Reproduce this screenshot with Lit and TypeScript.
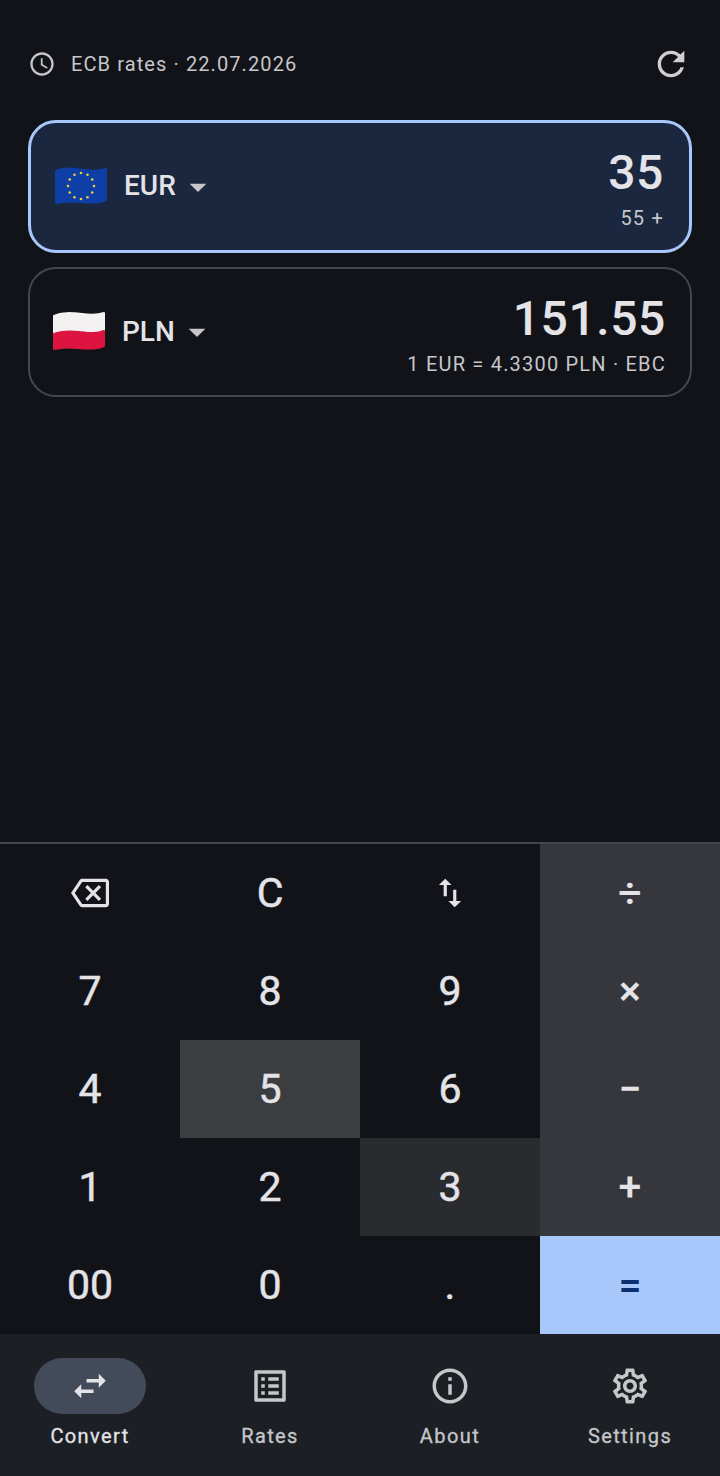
import { LitElement, html, css, svg } from 'lit';
import { customElement } from 'lit/decorators.js';
import { classMap } from 'lit/directives/class-map.js';

const ICONS = {
  clock:
    'M11.99 2C6.47 2 2 6.48 2 12s4.47 10 9.99 10C17.52 22 22 17.52 22 12S17.52 2 11.99 2zM12 20c-4.42 0-8-3.58-8-8s3.58-8 8-8 8 3.58 8 8-3.58 8-8 8zm.5-13H11v6l5.25 3.15.75-1.23-4.5-2.67z',
  refresh:
    'M17.65 6.35C16.2 4.9 14.21 4 12 4c-4.42 0-7.99 3.58-7.99 8s3.57 8 7.99 8c3.73 0 6.84-2.55 7.73-6h-2.08c-.82 2.33-3.04 4-5.65 4-3.31 0-6-2.69-6-6s2.69-6 6-6c1.66 0 3.14.69 4.22 1.78L13 11h7V4l-2.35 2.35z',
  drop: 'M7 10l5 5 5-5z',
  backspace:
    'M22 3H7c-.69 0-1.23.35-1.59.88L0 12l5.41 8.11c.36.53.9.89 1.59.89h15c1.1 0 2-.9 2-2V5c0-1.1-.9-2-2-2zm0 16H7.07L2.4 12l4.66-7H22v14zm-11.59-2L14 13.41 17.59 17 19 15.59 15.41 12 19 8.41 17.59 7 14 10.59 10.41 7 9 8.41 12.59 12 9 15.59z',
  swapVert: 'M16 17.01V10h-2v7.01h-3L15 21l4-3.99h-3zM9 3L5 6.99h3V14h2V6.99h3L9 3z',
  swapHoriz: 'M6.99 11L3 15l3.99 4v-3H14v-2H6.99v-3zM21 9l-3.99-4v3H10v2h7.01v3L21 9z',
  list:
    'M19 5v14H5V5h14m1.1-2H3.9c-.5 0-.9.4-.9.9v16.2c0 .4.4.9.9.9h16.2c.4 0 .9-.5.9-.9V3.9c0-.5-.5-.9-.9-.9zM11 7h6v2h-6V7zm0 4h6v2h-6v-2zm0 4h6v2h-6zM7 7h2v2H7zm0 4h2v2H7zm0 4h2v2H7z',
  info:
    'M11 7h2v2h-2zm0 4h2v6h-2zm1-9C6.48 2 2 6.48 2 12s4.48 10 10 10 10-4.48 10-10S17.52 2 12 2zm0 18c-4.41 0-8-3.59-8-8s3.59-8 8-8 8 3.59 8 8-3.59 8-8 8z',
  settings:
    'M19.43 12.98c.04-.32.07-.64.07-.98 0-.34-.03-.66-.07-.98l2.11-1.65c.19-.15.24-.42.12-.64l-2-3.46c-.09-.16-.26-.25-.44-.25-.06 0-.12.01-.17.03l-2.49 1c-.52-.4-1.08-.73-1.69-.98l-.38-2.65C14.46 2.18 14.25 2 14 2h-4c-.25 0-.46.18-.49.42l-.38 2.65c-.61.25-1.17.59-1.69.98l-2.49-1c-.06-.02-.12-.03-.18-.03-.17 0-.34.09-.43.25l-2 3.46c-.13.22-.07.49.12.64l2.11 1.65c-.04.32-.07.65-.07.98 0 .33.03.66.07.98l-2.11 1.65c-.19.15-.24.42-.12.64l2 3.46c.09.16.26.25.44.25.06 0 .12-.01.17-.03l2.49-1c.52.4 1.08.73 1.69.98l.38 2.65c.03.24.24.42.49.42h4c.25 0 .46-.18.49-.42l.38-2.65c.61-.25 1.17-.59 1.69-.98l2.49 1c.06.02.12.03.18.03.17 0 .34-.09.43-.25l2-3.46c.12-.22.07-.49-.12-.64l-2.11-1.65zm-1.98-1.71c.04.31.05.52.05.73 0 .21-.02.43-.05.73l-.14 1.13.89.7 1.08.84-.7 1.21-1.27-.51-1.04-.42-.9.68c-.43.32-.84.56-1.25.73l-1.06.43-.16 1.13-.2 1.35h-1.4l-.19-1.35-.16-1.13-1.06-.43c-.43-.18-.83-.41-1.23-.71l-.91-.7-1.06.43-1.27.51-.7-1.21 1.08-.84.89-.7-.14-1.13c-.03-.31-.05-.54-.05-.74s.02-.43.05-.73l.14-1.13-.89-.7-1.08-.84.7-1.21 1.27.51 1.04.42.9-.68c.43-.32.84-.56 1.25-.73l1.06-.43.16-1.13.2-1.35h1.39l.19 1.35.16 1.13 1.06.43c.43.18.83.41 1.23.71l.91.7 1.06-.43 1.27-.51.7 1.21-1.07.85-.89.7.14 1.13zM12 8c-2.21 0-4 1.79-4 4s1.79 4 4 4 4-1.79 4-4-1.79-4-4-4zm0 6c-1.1 0-2-.9-2-2s.9-2 2-2 2 .9 2 2-.9 2-2 2z',
};

const icon = (d: string, size: number) => html`
  <svg class="icon" width=${size} height=${size} viewBox="0 0 24 24" fill="currentColor"><path d=${d}></path></svg>
`;

// wavy flag outline, same shape for both currencies
const euFlag = () => {
  const stars = Array.from({ length: 12 }, (_, i) => {
    const a = (i * Math.PI) / 6;
    return svg`<circle cx=${27 + 13 * Math.sin(a)} cy=${19 + 13 * Math.cos(a)} r="1.3" fill="#f0cf3a"></circle>`;
  });
  return html`
    <svg class="flag" width="54" height="38" viewBox="0 0 54 38">
      <path
        d="M2 4C12 0 20 2 30 3C38 4 46 4 52 2V33C45 36 37 36 27 35C17 34 9 34 2 36Z"
        fill="#0d3fa6"
        stroke="#0d3fa6"
        stroke-width="2"
        stroke-linejoin="round"
      ></path>
      ${stars}
    </svg>
  `;
};

const plFlag = () => html`
  <svg class="flag" width="54" height="40" viewBox="0 0 54 40">
    <path
      d="M2 5C10 1 20 2 30 3C38 4 46 4 52 2V20C45 23 37 22 27 21C17 20 9 20 2 23Z"
      fill="#f3f1f2"
      stroke="#f3f1f2"
      stroke-width="2"
      stroke-linejoin="round"
    ></path>
    <path
      d="M2 23C9 20 17 20 27 21C37 22 45 23 52 20V35C45 38 37 38 27 37C17 36 9 36 2 38Z"
      fill="#dc143f"
      stroke="#dc143f"
      stroke-width="2"
      stroke-linejoin="round"
    ></path>
  </svg>
`;

const KEYS = [
  { icon: ICONS.backspace, size: 38 },
  { label: 'C' },
  { icon: ICONS.swapVert, size: 38 },
  { label: '÷', kind: 'op' },
  { label: '7' },
  { label: '8' },
  { label: '9' },
  { label: '×', kind: 'op' },
  { label: '4' },
  { label: '5', kind: 'press-strong' },
  { label: '6' },
  { label: '−', kind: 'op' },
  { label: '1' },
  { label: '2' },
  { label: '3', kind: 'press-soft' },
  { label: '+', kind: 'op' },
  { label: '00' },
  { label: '0' },
  { label: '.' },
  { label: '=', kind: 'op equals' },
];

const TABS = [
  { label: 'Convert', icon: ICONS.swapHoriz, active: true },
  { label: 'Rates', icon: ICONS.list },
  { label: 'About', icon: ICONS.info },
  { label: 'Settings', icon: ICONS.settings },
];

@customElement('app-root')
export class AppRoot extends LitElement {
  static override styles = css`
    :host {
      display: flex;
      flex-direction: column;
      height: 100vh;
      background: #111318;
      color: #e3e3e8;
      font-family: Roboto, 'Liberation Sans', sans-serif;
    }

    .icon {
      display: block;
      flex: none;
    }

    .main {
      flex: 1;
      padding: 0 28px;
    }

    .status {
      display: flex;
      align-items: center;
      height: 120px;
      padding: 8px 1px 0 0;
      box-sizing: border-box;
      color: #c6c6cb;
      font-size: 20px;
      letter-spacing: 1.1px;
    }

    .status .clock {
      margin-right: 15px;
    }

    .status .label {
      flex: 1;
    }

    .status .refresh {
      color: #d0d0d3;
    }

    .card {
      display: flex;
      align-items: center;
      justify-content: space-between;
      box-sizing: border-box;
      border-radius: 28px;
      border: 2px solid #45474c;
      height: 130px;
      padding: 0 24px 0 22px;
      margin-bottom: 14px;
    }

    .card.active {
      height: 133px;
      border: 3px solid #a8c7fa;
      background: #1a273e;
      padding-right: 25px;
      padding-left: 23px;
    }

    .currency {
      display: flex;
      align-items: center;
      gap: 16px;
      padding-bottom: 2px;
      font-size: 28px;
      font-weight: 500;
    }

    .currency .drop {
      margin-left: -14px;
      margin-top: 2px;
      color: #c6c6cb;
    }

    .amounts {
      padding-top: 4px;
      text-align: right;
    }

    .value {
      font-size: 48px;
      line-height: 56px;
      font-weight: 500;
      letter-spacing: 0.6px;
    }

    .sub {
      margin-top: 3px;
      font-size: 20px;
      line-height: 28px;
      letter-spacing: 1.2px;
      color: #c6c6cb;
    }

    .pad {
      display: grid;
      grid-template-columns: repeat(4, 180px);
      grid-auto-rows: 98px;
      border-top: 2px solid #45474c;
    }

    /* installed Roboto has no in-between weight, the thin stroke fills the gap */
    .key {
      display: flex;
      align-items: center;
      justify-content: center;
      font-size: 41px;
      -webkit-text-stroke: 0.5px currentColor;
    }

    .key.op {
      background: #36373d;
      font-weight: 500;
      -webkit-text-stroke: 0;
    }

    .key.press-strong {
      background: #3c3d40;
    }

    .key.press-soft {
      background: #2a2b2f;
    }

    .key.equals {
      background: #a8c7fa;
      color: #0b3070;
    }

    .nav {
      display: grid;
      grid-template-columns: repeat(4, 180px);
      height: 142px;
      background: #1c2024;
    }

    .tab {
      display: flex;
      flex-direction: column;
      align-items: center;
      padding-top: 24px;
      color: #c6c6cb;
      font-size: 20px;
      line-height: 28px;
      letter-spacing: 1.4px;
      -webkit-text-stroke: 0.3px currentColor;
    }

    .pill {
      display: flex;
      align-items: center;
      justify-content: center;
      width: 112px;
      height: 56px;
      margin-bottom: 8px;
      border-radius: 28px;
    }

    .tab.active {
      color: #e3e3e8;
    }

    .tab.active .pill {
      background: #434a5a;
    }
  `;

  override render() {
    return html`
      <div class="main">
        <div class="status">
          <span class="clock">${icon(ICONS.clock, 28)}</span>
          <span class="label">ECB rates · 22.07.2026</span>
          <span class="refresh">${icon(ICONS.refresh, 40)}</span>
        </div>
        ${this._card('EUR', euFlag(), '35', '55 +', true)}
        ${this._card('PLN', plFlag(), '151.55', '1 EUR = 4.3300 PLN · EBC', false)}
      </div>
      <div class="pad">
        ${KEYS.map(
          (k) => html`
            <div class="key ${k.kind ?? ''}">${k.icon ? icon(k.icon, k.size!) : k.label}</div>
          `
        )}
      </div>
      <div class="nav">
        ${TABS.map(
          (t) => html`
            <div class=${classMap({ tab: true, active: !!t.active })}>
              <div class="pill">${icon(t.icon, 42)}</div>
              <span>${t.label}</span>
            </div>
          `
        )}
      </div>
    `;
  }

  private _card(code: string, flag: unknown, value: string, sub: string, active: boolean) {
    return html`
      <div class=${classMap({ card: true, active })}>
        <div class="currency">
          ${flag}
          <span>${code}</span>
          <span class="drop">${icon(ICONS.drop, 40)}</span>
        </div>
        <div class="amounts">
          <div class="value">${value}</div>
          <div class="sub">${sub}</div>
        </div>
      </div>
    `;
  }
}

declare global {
  interface HTMLElementTagNameMap {
    'app-root': AppRoot;
  }
}
